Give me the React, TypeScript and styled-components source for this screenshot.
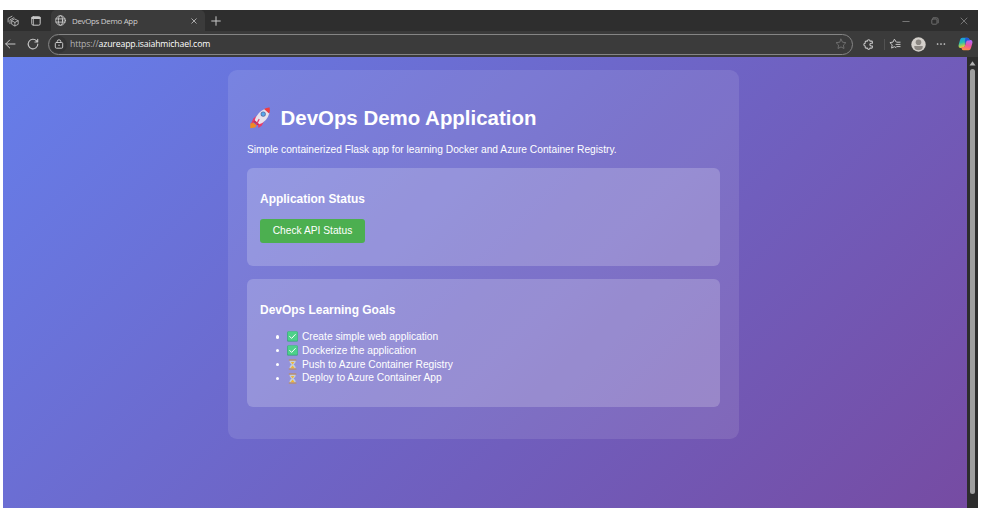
import React from "react";
import styled, { createGlobalStyle } from "styled-components";

const GlobalStyle = createGlobalStyle`
  * { box-sizing: border-box; }
  html, body { margin: 0; padding: 0; background: #fff; overflow: hidden; }
`;

const Page = styled.div`
  width: 985px;
  height: 508px;
  padding: 10px 7px 0 3px;
  background: #fff;
  overflow: hidden;
`;

const Browser = styled.div`
  display: flex;
  flex-direction: column;
  width: 975px;
  height: 498px;
  background: #3b3b3b;
  font-family: "Open Sans", "Noto Sans", sans-serif;
`;

const TabBar = styled.div`
  display: flex;
  align-items: center;
  height: 21px;
  background: #2e2e2e;
`;

const Slot = styled.div<{ $w: number; $dim?: boolean }>`
  display: flex;
  flex: none;
  align-items: center;
  justify-content: center;
  width: ${(p) => p.$w}px;
  height: 100%;
  color: ${(p) => (p.$dim ? "#757575" : "#c8c8c8")};
  svg { display: block; }
`;

const Tab = styled.div`
  display: flex;
  align-items: center;
  width: 154px;
  height: 21px;
  padding: 0 8px 0 4px;
  border-radius: 5px 5px 0 0;
  background: #3b3b3b;
  color: #d0d0d0;
`;

const TabTitle = styled.span`
  flex: 1;
  margin-left: 6px;
  font-size: 7.9px;
  line-height: 20px;
  letter-spacing: -0.29px;
  white-space: nowrap;
`;

const Spacer = styled.div`
  flex: 1;
`;

const Toolbar = styled.div`
  display: flex;
  align-items: center;
  height: 26px;
  background: #3b3b3b;
`;

const AddressBar = styled.div`
  display: flex;
  align-items: center;
  width: 805px;
  height: 21px;
  border: 1px solid #858585;
  border-radius: 11px;
  background: #3b3b3b;
`;

const LockBadge = styled.div`
  display: flex;
  align-items: center;
  justify-content: center;
  width: 17px;
  height: 17px;
  margin-left: 1px;
  border-radius: 50%;
  background: #333;
  color: #d0d0d0;
`;

const Url = styled.div`
  flex: 1;
  margin-left: 3px;
  color: #b4b4b4;
  font-size: 8.7px;
  line-height: 18px;
  letter-spacing: -0.14px;
  white-space: nowrap;
`;

const Host = styled.span`
  color: #fff;
`;

const Divider = styled.div`
  width: 1px;
  height: 11px;
  background: #525252;
`;

const Viewport = styled.div`
  display: flex;
  height: 451px;
  background: #2d2d2d;
`;

const Site = styled.main`
  width: 964px;
  height: 451px;
  padding-top: 13px;
  background: linear-gradient(135deg, #667eea 0%, #764ba2 100%) 0 0 / 100% 460px no-repeat;
  color: #fff;
  font-family: "Liberation Sans", Arial, sans-serif;
`;

const Container = styled.div`
  width: 511px;
  height: 369px;
  margin-left: 225px;
  padding: 0 19px;
  border-radius: 9px;
  background: rgba(255, 255, 255, 0.1);
`;

const Title = styled.h1`
  display: flex;
  align-items: center;
  height: 72px;
  margin: 0;
  padding-top: 24px;
  font-size: 20.45px;
  line-height: 24px;
  white-space: nowrap;
  svg { margin: 0 8.5px 0 2px; }
`;

const Intro = styled.p`
  height: 26px;
  margin: 0;
  font-size: 10.22px;
  line-height: 15px;
  white-space: nowrap;
`;

const Card = styled.section<{ $h: number }>`
  width: 473px;
  height: ${(p) => p.$h}px;
  margin-bottom: 13px;
  padding: 24px 13px 0;
  border-radius: 6px;
  background: rgba(255, 255, 255, 0.2);
`;

const CardTitle = styled.h3`
  margin: 0;
  font-size: 11.96px;
  line-height: 14px;
  white-space: nowrap;
`;

const ActionButton = styled.button`
  display: block;
  width: 105px;
  height: 24px;
  margin-top: 13px;
  padding: 0;
  border: 0;
  border-radius: 3px;
  background: #4caf50;
  color: #fff;
  font-family: inherit;
  font-size: 10.22px;
  line-height: 24px;
  white-space: nowrap;
`;

const Goals = styled.ul`
  margin: 13px 0 0;
  padding: 0;
  list-style: none;
`;

const Goal = styled.li`
  display: flex;
  align-items: center;
  height: 13.8px;
  padding-left: 15.5px;
  font-size: 10.22px;
  line-height: 13.8px;
  white-space: nowrap;
  svg { margin: 0 4px 0 8px; }
`;

const Bullet = styled.span`
  width: 3.4px;
  height: 3.4px;
  border-radius: 50%;
  background: #fff;
`;

const Scrollbar = styled.div`
  display: flex;
  flex-direction: column;
  align-items: center;
  width: 11px;
  height: 451px;
  padding-top: 4px;
`;

const Thumb = styled.div`
  width: 5px;
  height: 425px;
  margin-top: 3px;
  border-radius: 3px;
  background: #9f9f9f;
`;

const line = {
  fill: "none",
  stroke: "currentColor",
  strokeWidth: 1,
  strokeLinecap: "round" as const,
  strokeLinejoin: "round" as const,
};

const WorkspacesIcon = () => (
  <svg width="12" height="12" viewBox="0 0 12 12" {...line} strokeWidth={0.8}>
    <path d="M7.9 4.1 11.2 5.7v3.6L7.9 11 4.7 9.3V5.7zM4.8 5.8l3.1 1.6 3.2-1.6M7.9 7.4v3.4" />
    <path d="M3 8.6V4.8l3.9-2.1M1.1 7V3.4L5 1.2" />
  </svg>
);

const TabActionsIcon = () => (
  <svg width="10" height="10" viewBox="0 0 10 10" {...line}>
    <rect x="0.8" y="0.8" width="8.4" height="8.4" rx="1.5" />
    <path d="M1.3 1.9h7.4" strokeWidth="2.2" />
    <path d="M2.5 3v6" strokeWidth=".7" />
  </svg>
);

const GlobeIcon = () => (
  <svg width="11" height="11" viewBox="0 0 11 11" {...line} strokeWidth={0.85}>
    <circle cx="5.5" cy="5.5" r="4.8" />
    <ellipse cx="5.5" cy="5.5" rx="2.1" ry="4.8" />
    <path d="M1 3.9h9M1 7.1h9" />
  </svg>
);

const CloseIcon = ({ size = 6 }: { size?: number }) => (
  <svg width={size} height={size} viewBox="0 0 8 8" {...line}>
    <path d="m1 1 6 6M7 1 1 7" />
  </svg>
);

const PlusIcon = () => (
  <svg width="10" height="10" viewBox="0 0 10 10" {...line}>
    <path d="M5 .7v8.6M.7 5h8.6" />
  </svg>
);

const BackIcon = () => (
  <svg width="11" height="10" viewBox="0 0 11 10" {...line}>
    <path d="M10 5H.8M4.7 1 .7 5l4 4" />
  </svg>
);

const ReloadIcon = () => (
  <svg width="12" height="12" viewBox="0 0 12 12" {...line} strokeWidth={1.1}>
    <path d="M10.8 6.1A4.8 4.8 0 1 1 9.6 2.9l1 1.1M10.7 1.2V4H7.9" />
  </svg>
);

const LockIcon = () => (
  <svg width="10" height="10" viewBox="0 0 10 10" {...line} strokeWidth={0.95}>
    <rect x="1.3" y="3.5" width="7.4" height="5.7" rx="1.1" />
    <path d="M3.2 3.4V2.6a1.8 1.8 0 0 1 3.6 0v.8" />
    <circle cx="5" cy="6.3" r=".7" fill="currentColor" stroke="none" />
  </svg>
);

const StarIcon = () => (
  <svg width="12" height="12" viewBox="0 0 12 12" {...line} strokeWidth={0.85}>
    <path d="m6 1.1 1.5 3.1 3.4.5-2.5 2.4.6 3.4L6 8.9l-3 1.6.6-3.4L1.1 4.7l3.4-.5z" />
  </svg>
);

const ExtensionIcon = () => (
  <svg width="11" height="11" viewBox="0 0 11 11" {...line} strokeWidth={1.05}>
    <path d="M3.1 2.1h1.3a1.3 1.3 0 0 1 2.6 0h1.5q.9 0 .9.9v1.2H8.2a1.35 1.35 0 0 0 0 2.7h1.2v1.3q0 .9-.9.9H7a1.3 1.3 0 0 1-2.6 0H3.1q-.9 0-.9-.9V6.9a1.35 1.35 0 0 1 0-2.7V3q0-.9.9-.9z" />
  </svg>
);

const FavoritesIcon = () => (
  <svg width="12" height="12" viewBox="0 0 12 12" {...line} strokeWidth={1}>
    <path d="M7 3.7 5.4 1.2 4 4.1l-3.1.5 2.3 2.2-.6 3.3 2.7-1.4 1.6.8M7.8 4.2h3.3M7 6.4h4.1M7.8 8.6h3.3" />
  </svg>
);

const Avatar = () => (
  <svg width="15" height="15" viewBox="0 0 15 15">
    <circle cx="7.5" cy="7.5" r="7.2" fill="#d4d0cb" />
    <circle cx="7.5" cy="5.2" r="2.8" fill="#8b8782" />
    <path d="M3.3 9h8.4v1.2c0 4-8.4 4-8.4 0z" fill="#8b8782" />
  </svg>
);

const MoreIcon = () => (
  <svg width="10" height="4" viewBox="0 0 10 4" fill="#d5d5d5">
    <circle cx="1.6" cy="2" r=".85" />
    <circle cx="5" cy="2" r=".85" />
    <circle cx="8.4" cy="2" r=".85" />
  </svg>
);

const CopilotIcon = () => (
  <svg width="15" height="14" viewBox="0 0 15 14">
    <defs>
      <linearGradient id="cool" x1="0" y1="0" x2=".3" y2="1">
        <stop offset="0" stopColor="#168ff0" />
        <stop offset=".5" stopColor="#27bfae" />
        <stop offset="1" stopColor="#ffd51d" />
      </linearGradient>
      <linearGradient id="warm" x1=".6" y1="0" x2=".3" y2="1">
        <stop offset="0" stopColor="#b268fa" />
        <stop offset=".5" stopColor="#f0569a" />
        <stop offset="1" stopColor="#ff943e" />
      </linearGradient>
    </defs>
    <path d="M4.4.7h5q1.4 0 1.9 1.5l.5 1.7H9.4q-1 0-1.4 1.3L6.6 9.7Q6.2 11 5 11H2.6Q-.1 11 .7 7.8L2 3Q2.6.7 4.4.7z" fill="url(#cool)" />
    <path d="M10.6 13.3h-5q-1.4 0-1.9-1.5l-.5-1.7h2.4q1 0 1.4-1.3l1.4-4.5Q8.8 3 10 3h2.4q2.7 0 1.9 3.2L13 11q-.6 2.3-2.4 2.3z" fill="url(#warm)" />
    <path d="M7.5.7h2q1.4 0 1.9 1.5l.4 1.3H9.4q-1.2 0-1.6 1.7l-.9 2.7q-.5-4 .6-7.2z" fill="#2458d8" />
  </svg>
);

const MinimizeIcon = () => (
  <svg width="8" height="8" viewBox="0 0 8 8" {...line}>
    <path d="M.8 4.5h6.4" />
  </svg>
);

const RestoreIcon = () => (
  <svg width="8" height="8" viewBox="0 0 8 8" {...line} strokeWidth={0.9}>
    <rect x=".8" y="2" width="5.2" height="5.2" rx=".9" />
    <path d="M2.2.8h3.5q1.5 0 1.5 1.5v3.5" />
  </svg>
);

const Rocket = () => (
  <svg width="23" height="22" viewBox="0 0 23 22">
    <path d="m3.5 15.1 4.1 3.3-1.5 2.2-4.9.6.2-4.7z" fill="#f18b22" />
    <path d="m8.2 8.3-3.9 3.2-2.2 5.2 5-2.5zM15.3 13.4l-2.4 5.1-3.4 2.6-1-5.7z" fill="#e83b68" />
    <path d="M5.7 13.2q2.5-8 9.9-11.3l4.7 4.3q-2.1 8.2-10.2 11.1z" fill="#e7e2ed" />
    <path d="M15 2.1q3-1.9 5.6-1.6.8 3.2-.5 6z" fill="#ef3d42" />
    <path d="m5.5 13.2 4.8 4.1-1.8 1L4.3 15z" fill="#bd315f" />
    <path d="m10.7 12.4-3 5.8-1-.8 3-5.6z" fill="#e83b68" />
    <circle cx="14.2" cy="7.1" r="2.6" fill="#5b6fa8" />
    <circle cx="14.2" cy="7.1" r="1.8" fill="#54a9eb" />
  </svg>
);

const CheckBox = () => (
  <svg width="11" height="11" viewBox="0 0 11 11">
    <rect x=".3" y=".6" width="10.4" height="10" rx=".9" fill="#28a66b" />
    <rect x=".8" y=".6" width="9.6" height="9.1" rx=".7" fill="#4dd18a" />
    <path d="m2.4 5.2 2.2 2.2 4-4.2" fill="none" stroke="#fff" strokeWidth="1" />
  </svg>
);

const Hourglass = () => (
  <svg width="11" height="11" viewBox="0 0 11 11">
    <path d="M2.5 1.5h6.2c0 2.2-.9 2.9-2.1 4 1.2 1 2.1 1.8 2.1 4H2.5c0-2.2.9-3 2.1-4-1.2-1.1-2.1-1.8-2.1-4z" fill="#c3d0dd" />
    <path d="M3.8 3.1h3.6L5.6 5.6zM5.6 6.4l2.1 2.8H3.5z" fill="#f3b534" />
    <path d="M2.3 1h6.6M2.3 10h6.6" stroke="#c58a45" strokeWidth="1.2" strokeLinecap="round" />
  </svg>
);

const goals = [
  { done: true, text: "Create simple web application" },
  { done: true, text: "Dockerize the application" },
  { done: false, text: "Push to Azure Container Registry" },
  { done: false, text: "Deploy to Azure Container App" },
];

export default function App() {
  return (
    <>
      <GlobalStyle />
      <Page>
        <Browser>
          <TabBar>
            <Slot $w={20}><WorkspacesIcon /></Slot>
            <Slot $w={26}><TabActionsIcon /></Slot>
            <Slot $w={2} />
            <Tab>
              <GlobeIcon />
              <TabTitle>DevOps Demo App</TabTitle>
              <CloseIcon />
            </Tab>
            <Slot $w={22}><PlusIcon /></Slot>
            <Spacer />
            <Slot $w={29} $dim><MinimizeIcon /></Slot>
            <Slot $w={29} $dim><RestoreIcon /></Slot>
            <Slot $w={29} $dim><CloseIcon size={8} /></Slot>
          </TabBar>
          <Toolbar>
            <Slot $w={15}><BackIcon /></Slot>
            <Slot $w={30}><ReloadIcon /></Slot>
            <AddressBar>
              <LockBadge><LockIcon /></LockBadge>
              <Url>https://<Host>azureapp.isaiahmichael.com</Host></Url>
              <Slot $w={22} $dim><StarIcon /></Slot>
            </AddressBar>
            <Slot $w={31}><ExtensionIcon /></Slot>
            <Divider />
            <Slot $w={20}><FavoritesIcon /></Slot>
            <Slot $w={26}><Avatar /></Slot>
            <Slot $w={20}><MoreIcon /></Slot>
            <Spacer />
            <Slot $w={25}><CopilotIcon /></Slot>
          </Toolbar>
          <Viewport>
            <Site>
              <Container>
                <Title><Rocket />DevOps Demo Application</Title>
                <Intro>Simple containerized Flask app for learning Docker and Azure Container Registry.</Intro>
                <Card $h={98}>
                  <CardTitle>Application Status</CardTitle>
                  <ActionButton>Check API Status</ActionButton>
                </Card>
                <Card $h={128}>
                  <CardTitle>DevOps Learning Goals</CardTitle>
                  <Goals>
                    {goals.map((g) => (
                      <Goal key={g.text}>
                        <Bullet />
                        {g.done ? <CheckBox /> : <Hourglass />}
                        {g.text}
                      </Goal>
                    ))}
                  </Goals>
                </Card>
              </Container>
            </Site>
            <Scrollbar>
              <svg width="7" height="5" viewBox="0 0 7 5">
                <path d="M3.5.3 6.5 4.5h-6z" fill="#b0b0b0" />
              </svg>
              <Thumb />
            </Scrollbar>
          </Viewport>
        </Browser>
      </Page>
    </>
  );
}
